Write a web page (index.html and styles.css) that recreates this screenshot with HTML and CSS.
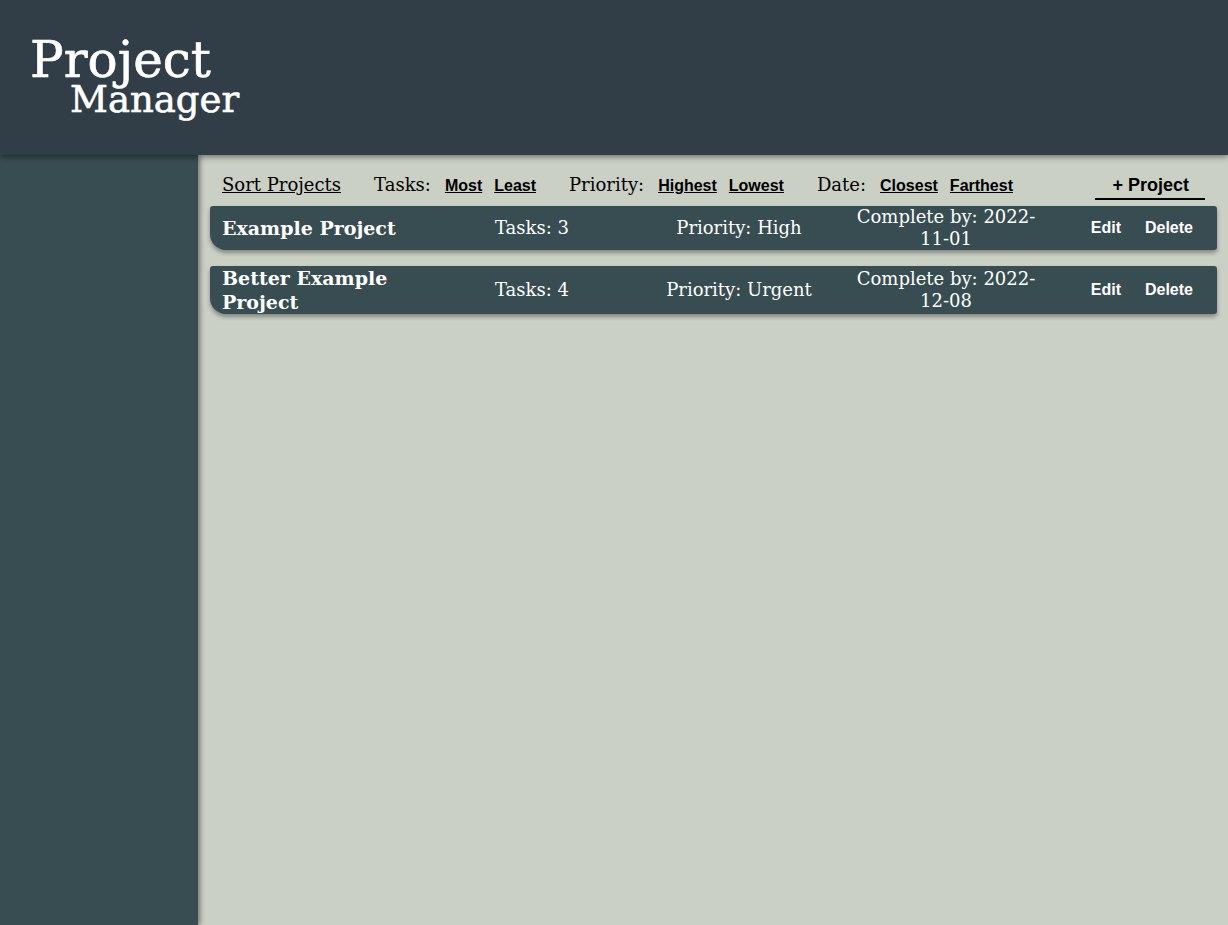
FILE: index.html
```html
<!DOCTYPE html>
<html lang="en">
<head>
<meta charset="utf-8">
<title>Project Manager</title>
<link rel="stylesheet" href="styles.css">
</head>
<body>
<header class="top">
  <h1 class="brand"><span class="brand-line">Project</span><span class="brand-line brand-indent">Manager</span></h1>
</header>
<div class="layout">
  <aside class="sidebar"></aside>
  <main class="main">
    <div class="sortbar">
      <span class="sort-title">Sort Projects</span>
      <div class="sort-group">
        <span class="sort-label">Tasks:</span>
        <a class="sort-link" href="#">Most</a>
        <a class="sort-link" href="#">Least</a>
      </div>
      <div class="sort-group">
        <span class="sort-label">Priority:</span>
        <a class="sort-link" href="#">Highest</a>
        <a class="sort-link" href="#">Lowest</a>
      </div>
      <div class="sort-group">
        <span class="sort-label">Date:</span>
        <a class="sort-link" href="#">Closest</a>
        <a class="sort-link" href="#">Farthest</a>
      </div>
      <button class="add-btn">+ Project</button>
    </div>
    <div class="projects">
      <div class="card">
        <div class="card-name">Example Project</div>
        <div class="card-cell">Tasks: 3</div>
        <div class="card-cell">Priority: High</div>
        <div class="card-cell">Complete by: 2022-11-01</div>
        <div class="card-spacer"></div>
        <button class="card-btn">Edit</button>
        <button class="card-btn">Delete</button>
      </div>
      <div class="card">
        <div class="card-name">Better Example Project</div>
        <div class="card-cell">Tasks: 4</div>
        <div class="card-cell">Priority: Urgent</div>
        <div class="card-cell">Complete by: 2022-12-08</div>
        <div class="card-spacer"></div>
        <button class="card-btn">Edit</button>
        <button class="card-btn">Delete</button>
      </div>
    </div>
  </main>
</div>
</body>
</html>
```
FILE: styles.css
```css
html, body {
  margin: 0;
  padding: 0;
  height: 100%;
}
body {
  font-family: "DejaVu Serif", "Liberation Serif", serif;
  background: #cbd0c5;
  color: #000;
  overflow: hidden;
}
.top {
  position: relative;
  z-index: 2;
  height: 155px;
  background: #323e47;
  box-shadow: 0 2px 6px rgba(0, 0, 0, 0.45);
  box-sizing: border-box;
  padding: 36px 0 0 30px;
}
.brand {
  margin: 0;
  color: #fff;
  font-weight: normal;
  display: flex;
  flex-direction: column;
  align-items: flex-start;
  -webkit-text-stroke: 0.6px #fff;
}
.brand-line {
  font-size: 50px;
  line-height: 48px;
}
.brand-indent {
  font-size: 37px;
  line-height: 31px;
  padding-left: 40px;
}
.layout {
  display: flex;
  height: calc(100% - 155px);
}
.sidebar {
  position: relative;
  z-index: 1;
  width: 198px;
  flex: 0 0 198px;
  background: #374d51;
  box-shadow: 2px 0 5px rgba(0, 0, 0, 0.45);
}
.main {
  flex: 1;
  padding: 19px 11px 0 12px;
}
.sortbar {
  display: flex;
  align-items: baseline;
  padding: 0 12px;
  height: 32px;
  box-sizing: border-box;
}
.sort-title {
  font-size: 18px;
  text-decoration: underline;
  margin-right: 33px;
}
.sort-group {
  display: flex;
  align-items: baseline;
  gap: 12px;
  margin-right: 33px;
}
.sort-label {
  font-size: 18px;
  margin-right: 2px;
}
.sort-link {
  font-family: "Liberation Sans", Arial, sans-serif;
  font-weight: bold;
  font-size: 16px;
  color: #000;
  text-decoration: underline;
}
.add-btn {
  margin-left: auto;
  font-family: "Liberation Sans", Arial, sans-serif;
  font-weight: bold;
  font-size: 18px;
  background: none;
  border: none;
  border-bottom: 2px solid #000;
  padding: 0 16px 2px 17px;
  color: #000;
}
.projects {
  display: flex;
  flex-direction: column;
  gap: 16px;
}
.card {
  display: grid;
  grid-template-columns: 215px 190px 224px 190px 1fr auto auto;
  align-items: center;
  background: #374d51;
  color: #fff;
  border-radius: 3px 3px 3px 16px;
  box-shadow: 0 3px 4px rgba(0, 0, 0, 0.35);
  padding: 0 12px;
}
.card-name {
  font-weight: bold;
  font-size: 19px;
  line-height: 24px;
}
.card-cell {
  font-size: 18px;
  line-height: 22px;
  text-align: center;
}
.card-btn {
  font-family: "Liberation Sans", Arial, sans-serif;
  font-weight: bold;
  font-size: 16px;
  color: #fff;
  background: none;
  border: none;
  padding: 6px 12px;
}
```
